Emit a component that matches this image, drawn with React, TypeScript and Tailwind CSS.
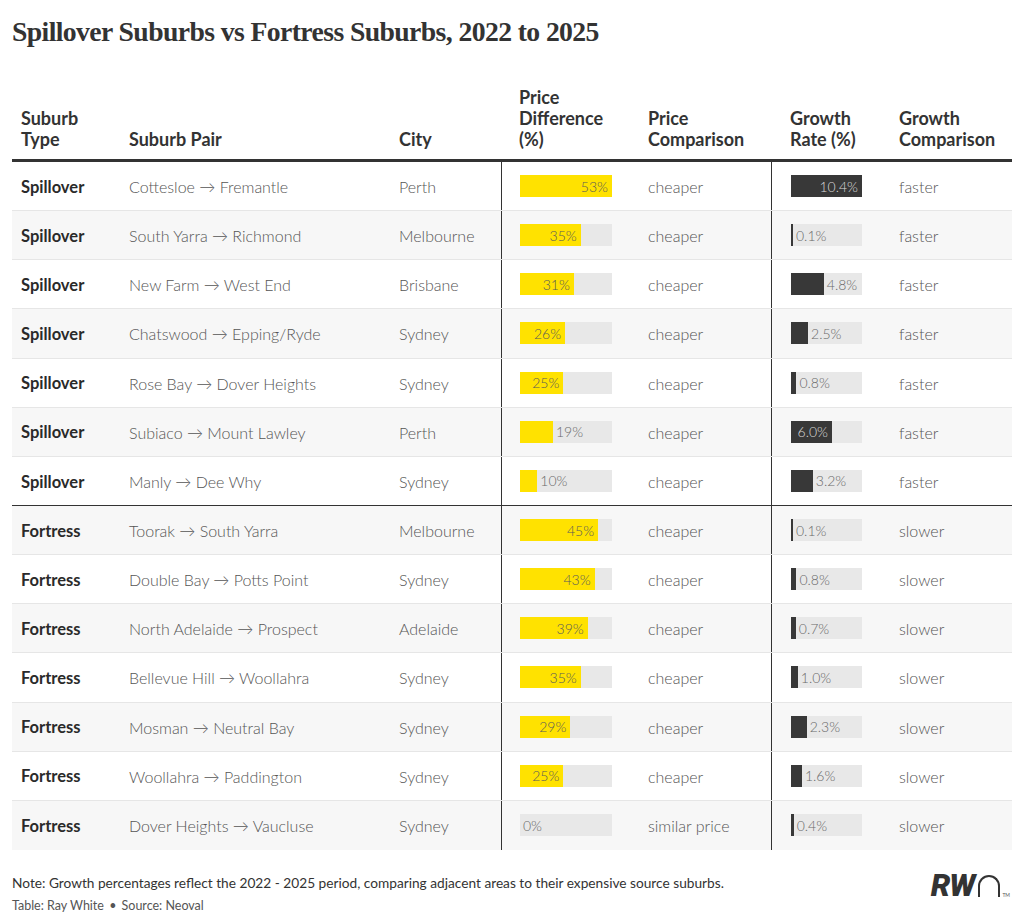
import React from "react";

type Row = {
  type: string;
  pair: [string, string];
  city: string;
  price: number;
  priceCmp: string;
  growth: number;
  growthCmp: string;
};

const rows: Row[] = [
  { type: "Spillover", pair: ["Cottesloe", "Fremantle"], city: "Perth", price: 53, priceCmp: "cheaper", growth: 10.4, growthCmp: "faster" },
  { type: "Spillover", pair: ["South Yarra", "Richmond"], city: "Melbourne", price: 35, priceCmp: "cheaper", growth: 0.1, growthCmp: "faster" },
  { type: "Spillover", pair: ["New Farm", "West End"], city: "Brisbane", price: 31, priceCmp: "cheaper", growth: 4.8, growthCmp: "faster" },
  { type: "Spillover", pair: ["Chatswood", "Epping/Ryde"], city: "Sydney", price: 26, priceCmp: "cheaper", growth: 2.5, growthCmp: "faster" },
  { type: "Spillover", pair: ["Rose Bay", "Dover Heights"], city: "Sydney", price: 25, priceCmp: "cheaper", growth: 0.8, growthCmp: "faster" },
  { type: "Spillover", pair: ["Subiaco", "Mount Lawley"], city: "Perth", price: 19, priceCmp: "cheaper", growth: 6.0, growthCmp: "faster" },
  { type: "Spillover", pair: ["Manly", "Dee Why"], city: "Sydney", price: 10, priceCmp: "cheaper", growth: 3.2, growthCmp: "faster" },
  { type: "Fortress", pair: ["Toorak", "South Yarra"], city: "Melbourne", price: 45, priceCmp: "cheaper", growth: 0.1, growthCmp: "slower" },
  { type: "Fortress", pair: ["Double Bay", "Potts Point"], city: "Sydney", price: 43, priceCmp: "cheaper", growth: 0.8, growthCmp: "slower" },
  { type: "Fortress", pair: ["North Adelaide", "Prospect"], city: "Adelaide", price: 39, priceCmp: "cheaper", growth: 0.7, growthCmp: "slower" },
  { type: "Fortress", pair: ["Bellevue Hill", "Woollahra"], city: "Sydney", price: 35, priceCmp: "cheaper", growth: 1.0, growthCmp: "slower" },
  { type: "Fortress", pair: ["Mosman", "Neutral Bay"], city: "Sydney", price: 29, priceCmp: "cheaper", growth: 2.3, growthCmp: "slower" },
  { type: "Fortress", pair: ["Woollahra", "Paddington"], city: "Sydney", price: 25, priceCmp: "cheaper", growth: 1.6, growthCmp: "slower" },
  { type: "Fortress", pair: ["Dover Heights", "Vaucluse"], city: "Sydney", price: 0, priceCmp: "similar price", growth: 0.4, growthCmp: "slower" },
];

const font = { fontFamily: "Lato, 'Noto Sans', sans-serif" };

function Bar({
  value,
  max,
  width,
  label,
  kind,
}: {
  value: number;
  max: number;
  width: number;
  label: string;
  kind: "yellow" | "dark";
}) {
  let fill = (value / max) * width;
  if (value > 0 && fill < 2) fill = 2;
  const inside = fill >= 38;
  const fillCls = kind === "yellow" ? "bg-[#ffe200]" : "bg-[#383838]";
  const insideText = kind === "yellow" ? "text-[#5a5a5a]" : "text-[#d9d9d9]";
  return (
    <div className="relative h-[22px] bg-[#e8e8e8] flex items-center" style={{ width }}>
      <div className={`h-full ${fillCls} flex items-center justify-end shrink-0`} style={{ width: fill }}>
        {inside && (
          <span className={`pr-[4px] pt-[1px] text-[14px] font-light leading-none ${insideText}`}>{label}</span>
        )}
      </div>
      {!inside && (
        <span className="pl-[3px] pt-[1px] text-[14px] font-light leading-none text-[#6a6a6a]">{label}</span>
      )}
    </div>
  );
}

const cols = "grid grid-cols-[108px_270px_111px_139px_131px_119px_1fr]";
const txt = "flex items-center pt-[2px] text-[16px] font-light text-[#555]";

export default function App() {
  return (
    <div className="w-[1024px] h-[924px] bg-white px-[12px] overflow-hidden" style={font}>
      <h1
        className="pt-[15px] text-[27.7px] leading-[34px] font-bold text-[#333] tracking-[-0.6px]"
        style={{ fontFamily: "'Liberation Serif', 'DejaVu Serif', serif" }}
      >
        Spillover Suburbs vs Fortress Suburbs, 2022 to 2025
      </h1>

      <div className="mt-[38px] w-[1000px]">
        <div className={`${cols} items-end pb-[9px] border-b-[3px] border-[#333] text-[18px] leading-[21px] font-bold text-[#333]`}>
          <div className="pl-[9px]">Suburb<br />Type</div>
          <div className="pl-[9px]">Suburb Pair</div>
          <div className="pl-[9px]">City</div>
          <div className="pl-[18px]">Price<br />Difference<br />(%)</div>
          <div className="pl-[8px]">Price<br />Comparison</div>
          <div className="pl-[19px]">Growth<br />Rate (%)</div>
          <div className="pl-[9px]">Growth<br />Comparison</div>
        </div>

        {rows.map((r, i) => {
          const bg = i % 2 === 1 ? "bg-[#f7f7f7]" : "bg-white";
          const border = i === 6 ? "border-b border-[#333]" : i === rows.length - 1 ? "" : "border-b border-[#e6e6e6]";
          return (
            <div key={i} className={`${cols} h-[49.15px] ${bg} ${border}`}>
              <div className="pl-[9px] flex items-center pt-[2px] text-[16.5px] font-bold text-[#2a2a2a]">{r.type}</div>
              <div className={`pl-[9px] ${txt}`}>
                {r.pair[0]} → {r.pair[1]}
              </div>
              <div className={`pl-[9px] ${txt}`}>{r.city}</div>
              <div className="pl-[18px] flex items-center border-l border-[#333]">
                <Bar value={r.price} max={53} width={92} label={`${r.price}%`} kind="yellow" />
              </div>
              <div className={`pl-[8px] ${txt}`}>{r.priceCmp}</div>
              <div className="pl-[19px] flex items-center border-l border-[#333]">
                <Bar value={r.growth} max={10.4} width={71} label={`${r.growth.toFixed(1)}%`} kind="dark" />
              </div>
              <div className={`pl-[9px] ${txt}`}>{r.growthCmp}</div>
            </div>
          );
        })}
      </div>

      <div className="mt-[24px] w-[1000px] flex justify-between items-start">
        <div>
          <p className="text-[13.7px] leading-[18px] text-[#333]">
            Note: Growth percentages reflect the 2022 - 2025 period, comparing adjacent areas to their expensive source suburbs.
          </p>
          <p className="mt-[5px] text-[12.5px] leading-[18px] text-[#555]">
            Table: Ray White <span className="mx-[2px]">•</span> Source: Neoval
          </p>
        </div>
        <div className="flex items-end pr-[2px] -mt-[2px]">
          <span
            className="text-[31px] leading-[28px] font-black italic text-[#333] tracking-[-1px]"
            style={{ fontFamily: "Roboto, 'Liberation Sans', sans-serif" }}
          >
            RW
          </span>
          <div className="ml-[4px] mb-[3px] w-[22px] h-[22px] border-l-[2px] border-r-[2px] border-t-[2px] border-[#333] rounded-t-[11px]" />
          <span className="ml-[2px] mb-[2px] text-[5px] leading-none text-[#555]">TM</span>
        </div>
      </div>
    </div>
  );
}
